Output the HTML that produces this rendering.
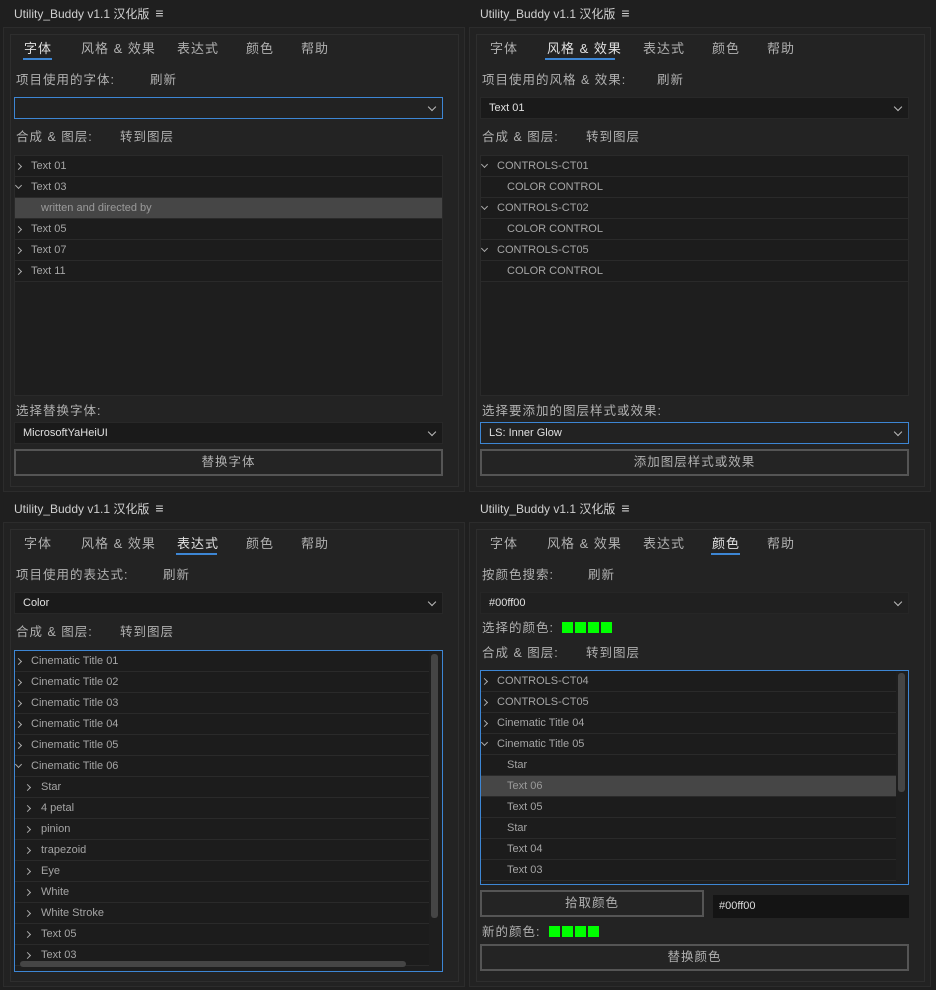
<!DOCTYPE html>
<html><head><meta charset="utf-8"><style>
*{box-sizing:border-box;margin:0;padding:0}
body{width:936px;height:990px;background:#1f1f1f;font-family:"Liberation Sans","Noto Sans CJK SC",sans-serif;color:#b8b8b8;position:relative;overflow:hidden}
.p{position:absolute;width:468px;height:495px}
.a{position:absolute;white-space:nowrap}
.title{left:14px;top:5px;font-size:12px;color:#d0d0d0}
.title b{font-weight:normal;font-size:14px;margin-left:6px}
.outer{left:3px;top:27px;width:462px;height:465px;background:#222;border:1px solid #2c2c2c}
.inner{left:10px;top:34px;width:449px;height:453px;border:1px solid #2e2e2e;background:#232323}
.tab{top:38px;font-size:13px;color:#b0b0b0;letter-spacing:1px}
.ul{top:58px;height:2px;background:#3d86d4}
.lbl{font-size:12.5px;color:#b0b0b0;letter-spacing:1px}
.dd{left:14px;width:429px;height:22px;background:#1a1a1a;border:1px solid #282828;font-size:11px;color:#e0e0e0;padding:4px 8px}
.dd.f{border-color:#3d86d4;background:#222}
.dd::after{content:"";position:absolute;right:7px;top:6px;width:5px;height:5px;border-right:1px solid #bbb;border-bottom:1px solid #bbb;transform:rotate(45deg)}
.list{left:14px;width:429px;background:#1e1e1e;border:1px solid #2a2a2a;overflow:hidden}
.list.f{border-color:#3d86d4}
.r{position:relative;height:21px;border-bottom:1px solid #2a2a2a;background:#1c1c1c;font-size:11px;color:#a5a5a5;line-height:21px;padding-left:16px}
.r.c{padding-left:26px}
.r.s{background:#464646;color:#9a9a9a}
.r.k{padding-left:26px}
.r .ch{position:absolute;left:1px;top:8px;width:5px;height:5px;border-right:1px solid #aaa;border-bottom:1px solid #aaa;transform:rotate(-45deg)}
.r .ch.o{transform:rotate(45deg);top:6px}
.r.k .ch{left:10px}
.btn{left:14px;width:429px;height:27px;border:2px solid #555;background:#242424;font-size:12.5px;color:#b0b0b0;text-align:center;line-height:23px;letter-spacing:1px}
.sq{display:inline-block;width:11px;height:11px;background:#00ff00;margin-right:2px;vertical-align:-1px}
.sb{position:absolute;background:#454545;border-radius:3px}
</style></head><body>

<!-- TOP LEFT -->
<div class="p" style="left:0;top:0">
<div class="a title">Utility_Buddy v1.1 汉化版<b>≡</b></div>
<div class="a outer"></div><div class="a inner"></div>
<div class="a tab" style="left:24px;color:#e0e0e0">字体</div><div class="a ul" style="left:23px;width:29px"></div>
<div class="a tab" style="left:81px">风格 &amp; 效果</div>
<div class="a tab" style="left:177px">表达式</div>
<div class="a tab" style="left:246px">颜色</div>
<div class="a tab" style="left:301px">帮助</div>
<div class="a lbl" style="left:16px;top:69px">项目使用的字体:</div>
<div class="a lbl" style="left:150px;top:69px">刷新</div>
<div class="a dd f" style="top:97px"></div>
<div class="a lbl" style="left:16px;top:126px">合成 &amp; 图层:</div>
<div class="a lbl" style="left:120px;top:126px">转到图层</div>
<div class="a list" style="top:155px;height:241px">
<div class="r"><span class="ch"></span>Text 01</div>
<div class="r"><span class="ch o"></span>Text 03</div>
<div class="r c s">written and directed by</div>
<div class="r"><span class="ch"></span>Text 05</div>
<div class="r"><span class="ch"></span>Text 07</div>
<div class="r"><span class="ch"></span>Text 11</div>
</div>
<div class="a lbl" style="left:16px;top:400px">选择替换字体:</div>
<div class="a dd" style="top:422px">MicrosoftYaHeiUI</div>
<div class="a btn" style="top:449px">替换字体</div>
</div>

<!-- TOP RIGHT -->
<div class="p" style="left:466px;top:0">
<div class="a title">Utility_Buddy v1.1 汉化版<b>≡</b></div>
<div class="a outer"></div><div class="a inner"></div>
<div class="a tab" style="left:24px">字体</div>
<div class="a tab" style="left:81px;color:#e0e0e0">风格 &amp; 效果</div><div class="a ul" style="left:79px;width:70px"></div>
<div class="a tab" style="left:177px">表达式</div>
<div class="a tab" style="left:246px">颜色</div>
<div class="a tab" style="left:301px">帮助</div>
<div class="a lbl" style="left:16px;top:69px">项目使用的风格 &amp; 效果:</div>
<div class="a lbl" style="left:191px;top:69px">刷新</div>
<div class="a dd" style="top:97px">Text 01</div>
<div class="a lbl" style="left:16px;top:126px">合成 &amp; 图层:</div>
<div class="a lbl" style="left:120px;top:126px">转到图层</div>
<div class="a list" style="top:155px;height:241px">
<div class="r"><span class="ch o"></span>CONTROLS-CT01</div>
<div class="r c">COLOR CONTROL</div>
<div class="r"><span class="ch o"></span>CONTROLS-CT02</div>
<div class="r c">COLOR CONTROL</div>
<div class="r"><span class="ch o"></span>CONTROLS-CT05</div>
<div class="r c">COLOR CONTROL</div>
</div>
<div class="a lbl" style="left:16px;top:400px">选择要添加的图层样式或效果:</div>
<div class="a dd f" style="top:422px">LS: Inner Glow</div>
<div class="a btn" style="top:449px">添加图层样式或效果</div>
</div>

<!-- BOTTOM LEFT -->
<div class="p" style="left:0;top:495px">
<div class="a title">Utility_Buddy v1.1 汉化版<b>≡</b></div>
<div class="a outer"></div><div class="a inner"></div>
<div class="a tab" style="left:24px">字体</div>
<div class="a tab" style="left:81px">风格 &amp; 效果</div>
<div class="a tab" style="left:177px;color:#e0e0e0">表达式</div><div class="a ul" style="left:176px;width:41px"></div>
<div class="a tab" style="left:246px">颜色</div>
<div class="a tab" style="left:301px">帮助</div>
<div class="a lbl" style="left:16px;top:69px">项目使用的表达式:</div>
<div class="a lbl" style="left:163px;top:69px">刷新</div>
<div class="a dd" style="top:97px">Color</div>
<div class="a lbl" style="left:16px;top:126px">合成 &amp; 图层:</div>
<div class="a lbl" style="left:120px;top:126px">转到图层</div>
<div class="a list f" style="top:155px;height:322px">
<div style="width:414px">
<div class="r"><span class="ch"></span>Cinematic Title 01</div>
<div class="r"><span class="ch"></span>Cinematic Title 02</div>
<div class="r"><span class="ch"></span>Cinematic Title 03</div>
<div class="r"><span class="ch"></span>Cinematic Title 04</div>
<div class="r"><span class="ch"></span>Cinematic Title 05</div>
<div class="r"><span class="ch o"></span>Cinematic Title 06</div>
<div class="r k"><span class="ch"></span>Star</div>
<div class="r k"><span class="ch"></span>4 petal</div>
<div class="r k"><span class="ch"></span>pinion</div>
<div class="r k"><span class="ch"></span>trapezoid</div>
<div class="r k"><span class="ch"></span>Eye</div>
<div class="r k"><span class="ch"></span>White</div>
<div class="r k"><span class="ch"></span>White Stroke</div>
<div class="r k"><span class="ch"></span>Text 05</div>
<div class="r k"><span class="ch"></span>Text 03</div>
</div>
<div class="sb" style="left:416px;top:3px;width:7px;height:264px"></div>
<div class="sb" style="left:5px;top:310px;width:386px;height:6px"></div>
</div>
</div>

<!-- BOTTOM RIGHT -->
<div class="p" style="left:466px;top:495px">
<div class="a title">Utility_Buddy v1.1 汉化版<b>≡</b></div>
<div class="a outer"></div><div class="a inner"></div>
<div class="a tab" style="left:24px">字体</div>
<div class="a tab" style="left:81px">风格 &amp; 效果</div>
<div class="a tab" style="left:177px">表达式</div>
<div class="a tab" style="left:246px;color:#e0e0e0">颜色</div><div class="a ul" style="left:245px;width:29px"></div>
<div class="a tab" style="left:301px">帮助</div>
<div class="a lbl" style="left:16px;top:69px">按颜色搜索:</div>
<div class="a lbl" style="left:122px;top:69px">刷新</div>
<div class="a dd" style="top:97px;border-color:#262626;background:#202020">#00ff00</div>
<div class="a lbl" style="left:16px;top:122px">选择的颜色: <span style="margin-left:4px"><span class="sq"></span><span class="sq"></span><span class="sq"></span><span class="sq"></span></span></div>
<div class="a lbl" style="left:16px;top:147px">合成 &amp; 图层:</div>
<div class="a lbl" style="left:120px;top:147px">转到图层</div>
<div class="a list f" style="top:175px;height:215px">
<div style="width:415px">
<div class="r"><span class="ch"></span>CONTROLS-CT04</div>
<div class="r"><span class="ch"></span>CONTROLS-CT05</div>
<div class="r"><span class="ch"></span>Cinematic Title 04</div>
<div class="r"><span class="ch o"></span>Cinematic Title 05</div>
<div class="r c">Star</div>
<div class="r c s">Text 06</div>
<div class="r c">Text 05</div>
<div class="r c">Star</div>
<div class="r c">Text 04</div>
<div class="r c">Text 03</div>
</div>
<div class="sb" style="left:417px;top:2px;width:7px;height:119px"></div>
</div>
<div class="a btn" style="top:395px;width:224px">拾取颜色</div>
<div class="a" style="left:247px;top:400px;width:196px;height:23px;background:#141414;font-size:11px;color:#ddd;padding:5px 6px">#00ff00</div>
<div class="a lbl" style="left:16px;top:426px">新的颜色: <span style="margin-left:4px"><span class="sq"></span><span class="sq"></span><span class="sq"></span><span class="sq"></span></span></div>
<div class="a btn" style="top:449px">替换颜色</div>
</div>

</body></html>
